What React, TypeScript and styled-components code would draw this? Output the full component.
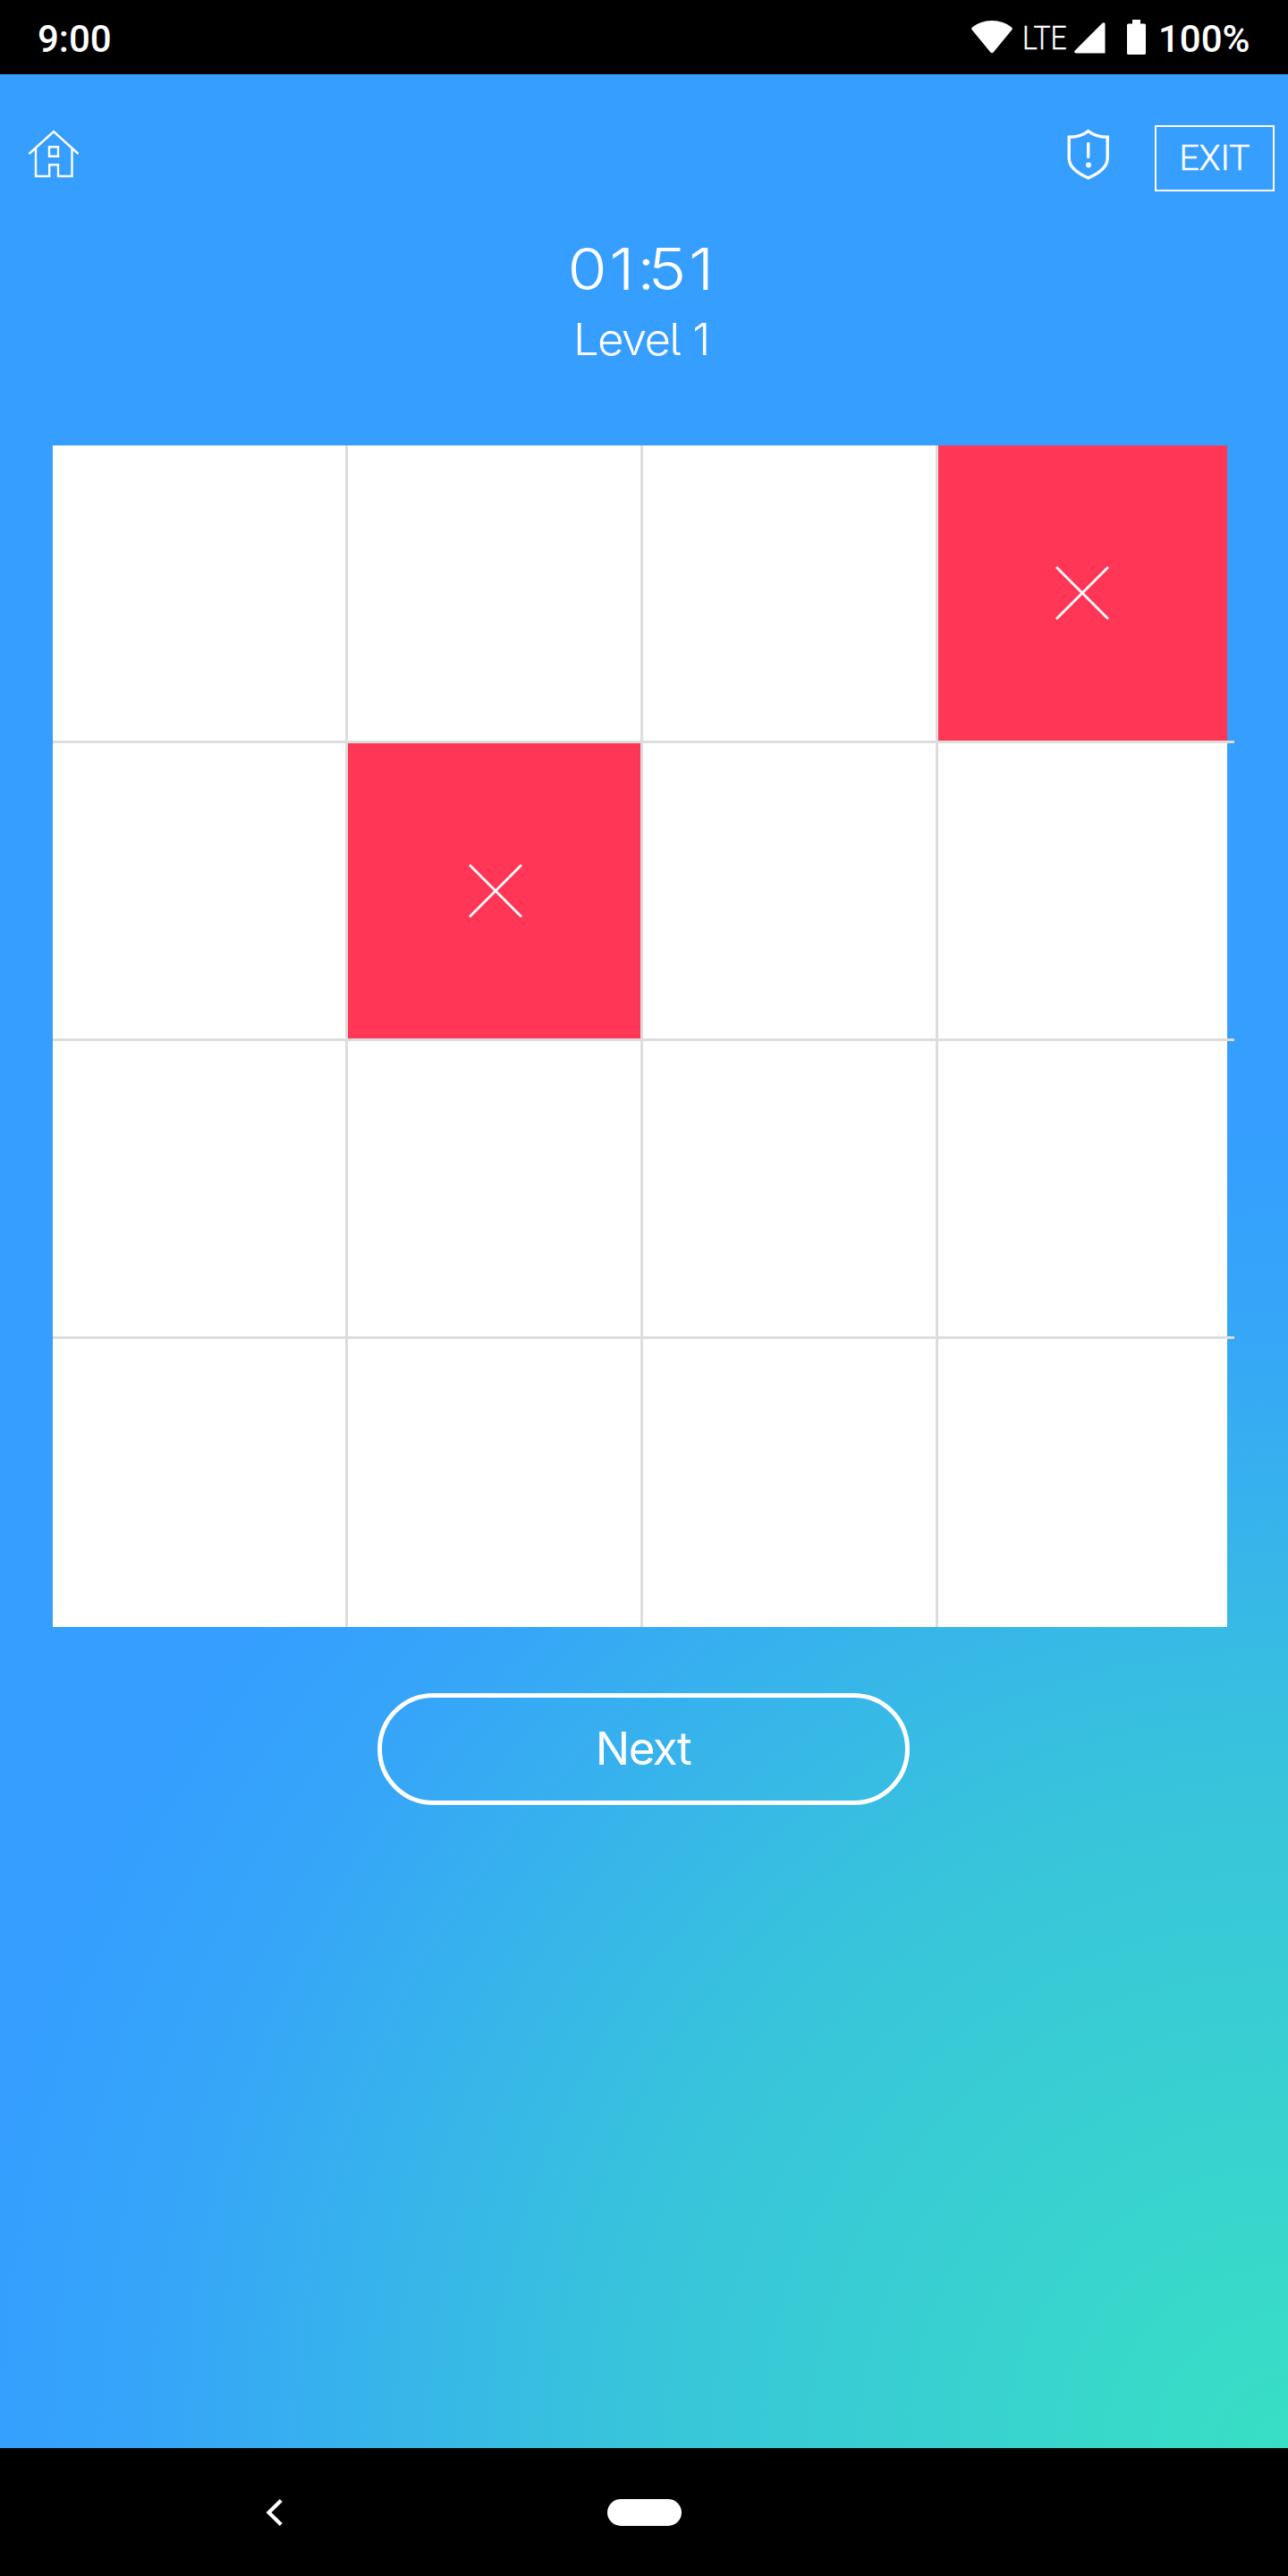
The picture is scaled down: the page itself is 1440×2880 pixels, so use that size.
import React from "react";
import styled, { createGlobalStyle } from "styled-components";

const GlobalStyle = createGlobalStyle`
  * { box-sizing: border-box; }
  html, body { margin: 0; padding: 0; background: #000; }
`;

const Screen = styled.div`
  width: 1440px;
  height: 2880px;
  display: flex;
  flex-direction: column;
  color: #fff;
  font-family: Inter, "Liberation Sans", sans-serif;
  overflow: hidden;
`;

const StatusBar = styled.header`
  height: 83px;
  flex: none;
  display: flex;
  align-items: center;
  justify-content: space-between;
  padding: 5px 43px 0 42px;
  background: #000;
  font-family: Roboto, sans-serif;
`;

const StatusText = styled.span`
  font-size: 42px;
  font-weight: 500;
  line-height: 50px;
`;

const StatusIcons = styled.div`
  display: flex;
  align-items: center;
  height: 50px;
`;

const Network = styled.span`
  width: 50px;
  margin: 0 0 2px 11px;
  font-size: 37px;
  font-weight: 300;
  line-height: 50px;
  -webkit-text-stroke: 0.4px #fff;
  transform: scaleX(0.86);
  transform-origin: left center;
`;

const StatusGlyph = styled.svg<{ $gap?: number; $lift: number }>`
  display: block;
  flex: none;
  margin-left: ${(p) => p.$gap ?? 0}px;
  margin-bottom: ${(p) => p.$lift}px;
`;

const BatteryText = styled(StatusText)`
  width: 102px;
  margin-left: 14px;
`;

const Game = styled.main`
  flex: 1;
  min-height: 0;
  display: flex;
  flex-direction: column;
  background: radial-gradient(
    circle 1480px at 100% 100%,
    #38dfc4 0%,
    #38c4db 50%,
    #37b6e9 67%,
    #36a6f8 85%,
    #359eff 100%
  );
`;

const TopBar = styled.div`
  height: 131px;
  flex: none;
  display: flex;
  align-items: flex-start;
  padding: 57px 15px 0 30px;
`;

const HomeIcon = styled.svg`
  display: block;
  margin-top: 3px;
`;

const ShieldIcon = styled.svg`
  display: block;
  margin: 2px 49px 0 auto;
`;

const ExitButton = styled.button`
  width: 134px;
  height: 74px;
  padding: 1px 0 0;
  border: 2px solid #fff;
  background: transparent;
  color: #fff;
  font: 300 39px/69px Roboto, sans-serif;
  -webkit-text-stroke: 0.5px #fff;
`;

const Progress = styled.div`
  height: 284px;
  flex: none;
  display: flex;
  flex-direction: column;
  align-items: center;
  padding-top: 46px;
`;

const Timer = styled.div`
  margin-right: 4px;
  font-size: 65px;
  font-weight: 300;
  line-height: 81px;
  letter-spacing: 2.5px;
  transform: scaleX(1.1);
`;

const Colon = styled.span`
  letter-spacing: -7px;
`;

const Level = styled.div`
  margin-right: 6px;
  font-size: 49px;
  font-weight: 300;
  line-height: 78px;
  letter-spacing: -1.7px;
  word-spacing: 2px;
  font-feature-settings: "cv05" 1;
  transform: scaleX(1.04);
`;

const Board = styled.div`
  width: 1313px;
  height: 1321px;
  flex: none;
  margin-left: 59px;
  display: flex;
  flex-direction: column;
  background: #fff;
`;

/* Row dividers run 8px past the right edge of the board. */
const BoardRow = styled.div`
  width: 1321px;
  height: 333px;
  flex: none;
  display: flex;
  border-bottom: 3px solid #ddd;

  &:last-child {
    height: 322px;
    border-bottom: 0;
  }
`;

const Cell = styled.div<{ $wrong: boolean }>`
  width: 330px;
  flex: none;
  display: flex;
  align-items: center;
  justify-content: center;
  padding-left: 3px;
  border-right: 3px solid #ddd;
  background: ${(p) => (p.$wrong ? "#ff3656" : "#fff")};

  &:last-child {
    width: 323px;
    padding: 0 1px 0 0;
    border-right: 0;
  }
`;

const NextButton = styled.button`
  width: 595px;
  height: 125px;
  flex: none;
  align-self: center;
  margin: 74px 1px 0 0;
  padding: 0 1px 2px 0;
  border: 5px solid #fff;
  border-radius: 63px;
  background: transparent;
  color: #fff;
  font: 400 51px/113px Inter, sans-serif;
  letter-spacing: -1.5px;
`;

const NavBar = styled.nav`
  height: 143px;
  flex: none;
  display: grid;
  grid-template-columns: 297px 382px 83px;
  align-items: center;
  background: #000;
`;

const BackIcon = styled.svg`
  grid-column: 2;
  display: block;
`;

const HomePill = styled.span`
  height: 30px;
  border-radius: 15px;
  background: #fff;
`;

const Cross = () => (
  <svg width="60" height="60" viewBox="0 0 60 60" fill="none" stroke="#fff" strokeWidth="2.8">
    <path d="M1 1 59 59M59 1 1 59" />
  </svg>
);

const board = ["...x", ".x..", "....", "...."];

export default function App() {
  return (
    <Screen>
      <GlobalStyle />
      <StatusBar>
        <StatusText>9:00</StatusText>
        <StatusIcons>
          <StatusGlyph $lift={6} width="46" height="37" viewBox="0 0 46 37" fill="#fff">
            <path d="M1 7.5Q10 0 23 0T45 7.5Q46.5 9 45.200 10.500L25 35Q23 37.500 21 35L.8 10.500Q-.5 9 1 7.500Z" />
          </StatusGlyph>
          <Network>LTE</Network>
          <StatusGlyph $gap={8} $lift={3} width="35" height="35" viewBox="0 0 35 35" fill="#fff">
            <path d="M.8 31.500 31.500.8Q34.500-.8 34.500 2V34.500H2Q-.8 34 .8 31.500Z" />
          </StatusGlyph>
          <StatusGlyph $gap={24} $lift={6} width="21" height="39" viewBox="0 0 21 39" fill="#fff">
            <path d="M6 0H15V4.500H19.500Q21 4.500 21 6V37.500Q21 39 19.500 39H1.500Q0 39 0 37.500V6Q0 4.500 1.500 4.500H6Z" />
          </StatusGlyph>
          <BatteryText>100%</BatteryText>
        </StatusIcons>
      </StatusBar>

      <Game>
        <TopBar>
          <HomeIcon width="60" height="58" viewBox="0 0 60 58" fill="none" stroke="#fff" strokeWidth="2.4">
            <path d="M2.500 29 30 4 57.500 29M10 22.500V54H25.200V41.300H35V54H50.500V22.500M25 21.200H35V31.800H25Z" />
          </HomeIcon>
          <ShieldIcon width="50" height="60" viewBox="0 0 50 60" fill="none" stroke="#fff" strokeWidth="3.4">
            <path d="M24.700 4.500Q16.700 11.300 3.200 11.300V35Q3.200 47.500 24.700 57Q46.200 47.500 46.200 35V11.300Q32.700 11.300 24.700 4.500Z" />
            <path d="M24.700 18.500V33.500" strokeLinecap="round" />
            <circle cx="25" cy="42.500" r="3" fill="#fff" stroke="none" />
          </ShieldIcon>
          <ExitButton>EXIT</ExitButton>
        </TopBar>

        <Progress>
          <Timer>
            01<Colon>:</Colon>51
          </Timer>
          <Level>Level 1</Level>
        </Progress>

        <Board>
          {board.map((row, r) => (
            <BoardRow key={r}>
              {[...row].map((mark, c) => (
                <Cell key={c} $wrong={mark === "x"}>
                  {mark === "x" && <Cross />}
                </Cell>
              ))}
            </BoardRow>
          ))}
        </Board>

        <NextButton>Next</NextButton>
      </Game>

      <NavBar>
        <BackIcon width="20" height="30" viewBox="0 0 20 30" fill="none" stroke="#fff" strokeWidth="4.200">
          <path d="M17.300 1.500 3.500 15 17.300 28.500" />
        </BackIcon>
        <HomePill />
      </NavBar>
    </Screen>
  );
}
